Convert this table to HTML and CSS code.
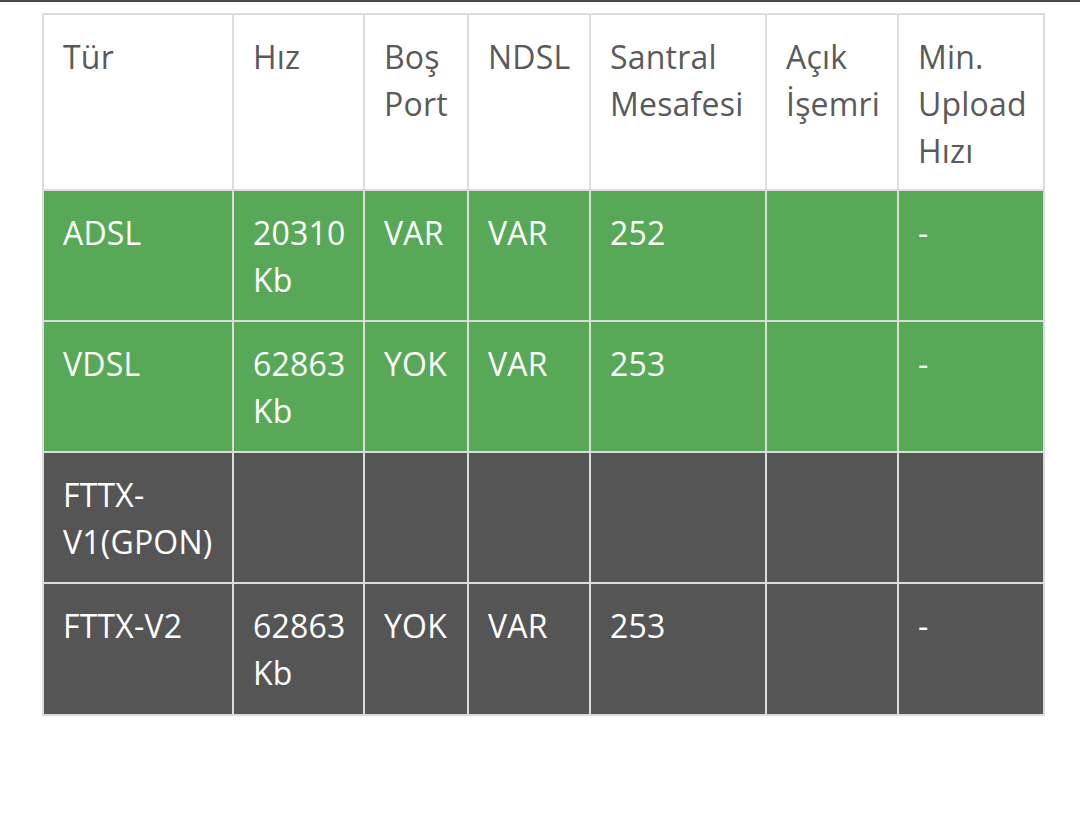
FILE: index.html
```html
<!DOCTYPE html>
<html lang="tr">
<head>
<meta charset="utf-8">
<link rel="stylesheet" href="styles.css">
</head>
<body>
<div class="topbar"></div>
<main class="wrap">
<table class="grid">
<colgroup>
<col class="c1"><col class="c2"><col class="c3"><col class="c4"><col class="c5"><col class="c6"><col class="c7">
</colgroup>
<thead>
<tr class="head">
<th>Tür</th><th>Hız</th><th>Boş Port</th><th>NDSL</th><th>Santral Mesafesi</th><th>Açık İşemri</th><th>Min. Upload Hızı</th>
</tr>
</thead>
<tbody>
<tr class="ok"><td>ADSL</td><td>20310 Kb</td><td>VAR</td><td>VAR</td><td>252</td><td></td><td>-</td></tr>
<tr class="ok"><td>VDSL</td><td>62863 Kb</td><td>YOK</td><td>VAR</td><td>253</td><td></td><td>-</td></tr>
<tr class="na"><td>FTTX-V1(GPON)</td><td></td><td></td><td></td><td></td><td></td><td></td></tr>
<tr class="na last"><td>FTTX-V2</td><td>62863 Kb</td><td>YOK</td><td>VAR</td><td>253</td><td></td><td>-</td></tr>
</tbody>
</table>
</main>
</body>
</html>
```
FILE: styles.css
```css
html, body {
  margin: 0;
  padding: 0;
  background: #ffffff;
}
body {
  font-family: "Open Sans", "Noto Sans", sans-serif;
  font-size: 32px;
  line-height: 47px;
  letter-spacing: 0.2px;
}
.topbar {
  height: 2px;
  background: #4a4a4a;
}
.wrap {
  padding: 11px 0 0 42px;
}
.grid {
  border-collapse: collapse;
  table-layout: fixed;
  width: 1003px;
}
.c1 { width: 190px; }
.c2 { width: 131px; }
.c3 { width: 104px; }
.c4 { width: 122px; }
.c5 { width: 176px; }
.c6 { width: 132px; }
.c7 { width: 146px; }
.grid th,
.grid td {
  border: 2px solid #dcdcdc;
  padding: 18px 19px 17px 19px;
  text-align: left;
  vertical-align: top;
  font-weight: 400;
}
.head th {
  color: #5a5a5a;
  background: #ffffff;
  padding-top: 18px;
  padding-bottom: 15px;
}
.ok td {
  background: #57a957;
  color: #ffffff;
}
.na td {
  background: #555555;
  color: #ffffff;
}
.last td {
  padding-bottom: 18px;
}
```
